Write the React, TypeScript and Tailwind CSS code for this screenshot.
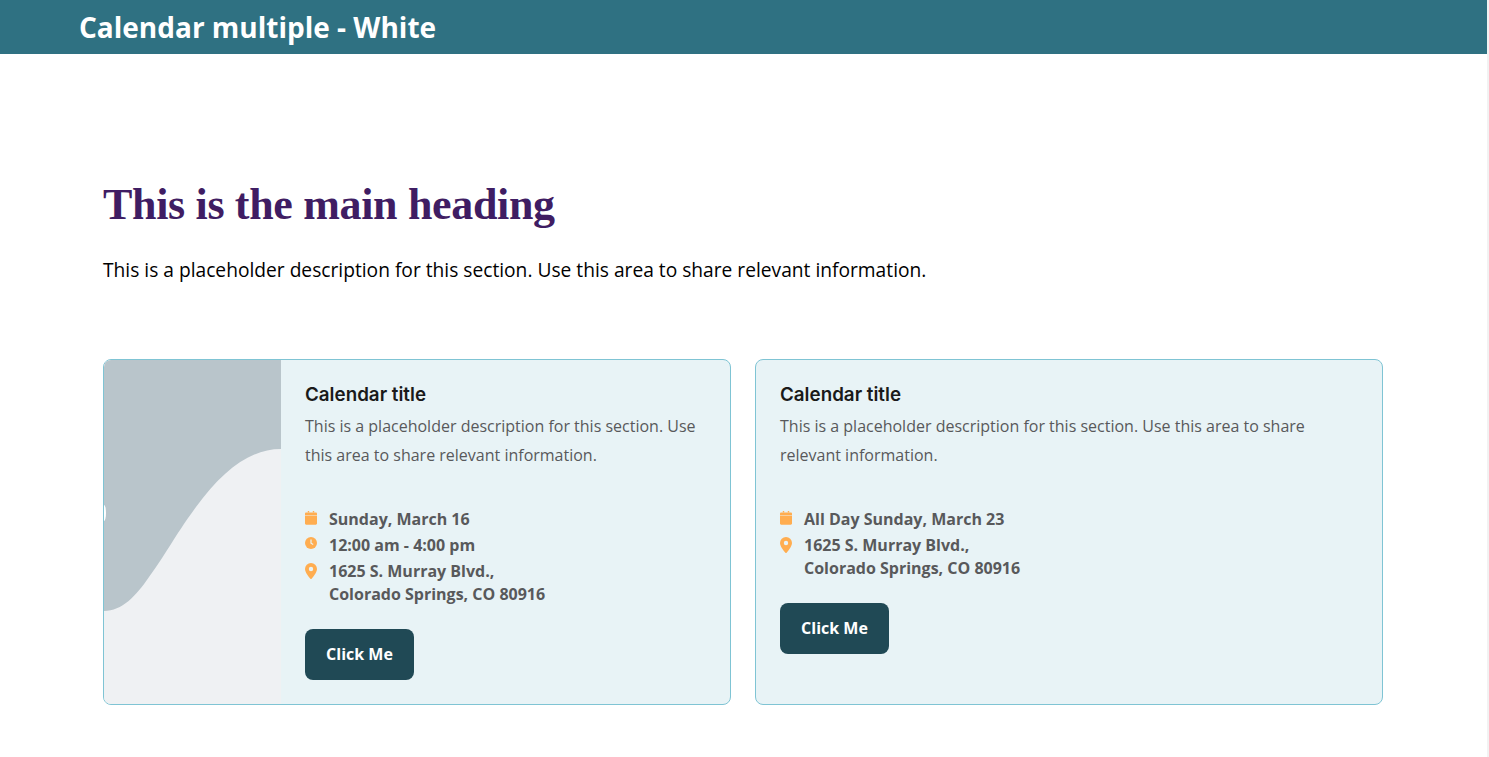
const OPEN = "font-['Open_Sans',sans-serif]"

function CalendarIcon() {
  return (
    <svg width="12" height="14" viewBox="0 0 12 14" className="shrink-0" fill="#ffad50">
      <path d="M2.8 0h1.4v1.4H2.8zM7.8 0h1.4v1.4H7.8z" />
      <path d="M1.2 1.4h9.6c.66 0 1.2.54 1.2 1.2v1.4H0V2.6c0-.66.54-1.2 1.2-1.2zM0 4.6h12v7.9c0 .66-.54 1.2-1.2 1.2H1.2C.54 13.7 0 13.16 0 12.5z" />
    </svg>
  )
}

function ClockIcon() {
  return (
    <svg width="12" height="12" viewBox="0 0 12 12" className="shrink-0">
      <circle cx="6" cy="6" r="6" fill="#ffad50" />
      <path d="M6 2.6v3.6l2.2 1.3" fill="none" stroke="#e8f3f6" strokeWidth="1.2" />
    </svg>
  )
}

function PinIcon() {
  return (
    <svg width="12" height="16" viewBox="0 0 12 16" className="shrink-0">
      <path fillRule="evenodd" fill="#ffad50" d="M6 0a6 6 0 0 1 6 6c0 3.2-3.6 7.8-5.2 9.6a1 1 0 0 1-1.6 0C3.6 13.8 0 9.2 0 6a6 6 0 0 1 6-6zm0 3.8a2.2 2.2 0 1 0 0 4.4 2.2 2.2 0 0 0 0-4.4z" />
    </svg>
  )
}

function MetaRow({ icon, children, iconClass }: { icon: React.ReactNode; children: React.ReactNode; iconClass: string }) {
  return (
    <div className="flex gap-3 text-base leading-[23px] font-bold text-[#58595b]">
      <div className={`w-3 ${iconClass}`}>{icon}</div>
      <div>{children}</div>
    </div>
  )
}

function CardBody({ children }: { children: React.ReactNode }) {
  return (
    <div className="flex-1 min-w-0 pt-[22px] pb-6 pl-6 pr-6">
      <h3 className="font-['Inter',sans-serif] text-[18.8px] leading-[26px] font-semibold text-[#1a1a1a]">Calendar title</h3>
      <p className="mt-[4px] text-base leading-[29px] text-[#58595b]">
        This is a placeholder description for this section. Use this area to share relevant information.
      </p>
      <div className="mt-[38px] flex flex-col gap-[3px]">{children}</div>
      <button className="mt-[23px] h-[51px] w-[109px] rounded-lg bg-[#204955] pb-[2px] text-base font-bold text-white block">
        Click Me
      </button>
    </div>
  )
}

function Card({ children, art }: { children: React.ReactNode; art?: boolean }) {
  return (
    <div className="flex overflow-hidden rounded-lg border border-[#7fc4d4] bg-[#e8f3f6]">
      {art && (
        <div className="w-[177px] shrink-0 bg-[#eff1f3]">
          <svg viewBox="0 0 177 344" className="h-full w-full block" preserveAspectRatio="none">
            <path fill="#b9c5cb" d="M177 89C145 89 118 112 92 147C70 177 60 197 45 217C32 236 18 251 0 251V0H177Z" />
            <ellipse cx="0" cy="153" rx="2" ry="8" fill="#ffffff" />
          </svg>
        </div>
      )}
      <CardBody>{children}</CardBody>
    </div>
  )
}

export default function App() {
  return (
    <div className={`${OPEN} min-h-[757px] bg-white text-black border-r-2 border-[#f2f2f2]`}>
      <header className="h-[54px] bg-[#2f7182] pl-[79px] flex items-center">
        <h1 className="text-[28px] leading-none font-bold text-white">Calendar multiple - White</h1>
      </header>
      <main className="ml-[103px] w-[1280px] pt-[125px]">
        <h2 className="font-['Liberation_Serif',serif] text-[44px] leading-[52px] tracking-[-0.33px] font-bold text-[#3f1d63]">
          This is the main heading
        </h2>
        <p className="mt-[26px] text-[19.2px] leading-[26px]">
          This is a placeholder description for this section. Use this area to share relevant information.
        </p>
        <div className="mt-[76px] grid grid-cols-2 gap-6">
          <Card art>
            <MetaRow icon={<CalendarIcon />} iconClass="pt-[3px]">Sunday, March 16</MetaRow>
            <MetaRow icon={<ClockIcon />} iconClass="pt-[3px]">12:00 am - 4:00 pm</MetaRow>
            <MetaRow icon={<PinIcon />} iconClass="pt-[3px]">1625 S. Murray Blvd.,<br />Colorado Springs, CO 80916</MetaRow>
          </Card>
          <Card>
            <MetaRow icon={<CalendarIcon />} iconClass="pt-[3px]">All Day Sunday, March 23</MetaRow>
            <MetaRow icon={<PinIcon />} iconClass="pt-[3px]">1625 S. Murray Blvd.,<br />Colorado Springs, CO 80916</MetaRow>
          </Card>
        </div>
      </main>
    </div>
  )
}
